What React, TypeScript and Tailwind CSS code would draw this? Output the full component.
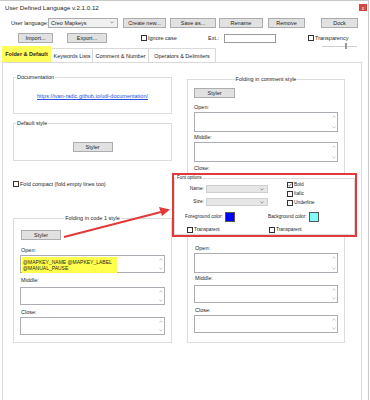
import React from "react";

function Btn({ label, className = "" }: { label: string; className?: string }) {
  return (
    <div
      className={`flex items-center justify-center bg-[#e1e1e1] border border-[#adadad] text-[#1e1e1e] ${className}`}
    >
      {label}
    </div>
  );
}

function Check({ label, checked = false, className = "" }: { label: string; checked?: boolean; className?: string }) {
  return (
    <div className={`flex items-center ${className}`}>
      <span className="relative w-[6px] h-[6px] border border-[#333] bg-white shrink-0">
        {checked && (
          <svg viewBox="0 0 6 6" className="absolute inset-0 w-[4px] h-[4px]">
            <path d="M0.5 3 L2.2 4.6 L5.5 0.8" fill="none" stroke="#222" strokeWidth="0.9" />
          </svg>
        )}
      </span>
      <span className="ml-[1px] whitespace-nowrap">{label}</span>
    </div>
  );
}

function Chevron({ up = false }: { up?: boolean }) {
  return (
    <svg viewBox="0 0 6 4" className="w-[4px] h-[3px]">
      <path d={up ? "M0.5 3.5 L3 1 L5.5 3.5" : "M0.5 0.5 L3 3 L5.5 0.5"} fill="none" stroke="#9a9a9a" strokeWidth="0.8" />
    </svg>
  );
}

function Area({ className = "", children }: { className?: string; children?: React.ReactNode }) {
  return (
    <div className={`flex border border-[#abadb3] bg-white ${className}`}>
      <div className="flex-1 min-w-0">{children}</div>
      <div className="flex flex-col justify-between items-center w-[7px] py-[2px]">
        <Chevron up />
        <Chevron />
      </div>
    </div>
  );
}

function Combo({ value = "", className = "", disabled = false }: { value?: string; className?: string; disabled?: boolean }) {
  return (
    <div
      className={`flex items-center justify-between border pl-[2px] pr-[3px] ${
        disabled ? "bg-[#e6e6e6] border-[#cfcfcf]" : "bg-[#f0f0f0] border-[#acacac]"
      } ${className}`}
    >
      <span className="whitespace-nowrap">{value}</span>
      <svg viewBox="0 0 6 4" className="w-[4px] h-[3px]">
        <path d="M0.5 0.5 L3 3 L5.5 0.5" fill="none" stroke="#555" strokeWidth="0.8" />
      </svg>
    </div>
  );
}

function FoldingGroup({ title, open, tucked = false }: { title: string; open?: React.ReactNode; tucked?: boolean }) {
  return (
    <fieldset className="mt-[28px] h-[128px] border border-[#dcdcdc] px-[6px]">
      <legend className="mx-auto px-[1px] leading-[6px]">{title}</legend>
      <Btn label="Styler" className={`${tucked ? "mt-[2px]" : "mt-[9px]"} ml-[1px] w-[40px] h-[10px]`} />
      <div className={`${tucked ? "mt-[12px]" : "mt-[7px]"} ml-[1px] h-[6px]`}>Open:</div>
      <Area className={`mt-[2px] ${tucked ? "h-[20px]" : "h-[18px]"}`}>{open}</Area>
      <div className={`${tucked ? "mt-[2px]" : "mt-[4px]"} ml-[1px] h-[6px]`}>Middle:</div>
      <Area className="mt-[4px] h-[18px]" />
      <div className="mt-[4px] ml-[1px] h-[6px]">Close:</div>
      <Area className="mt-[2px] h-[18px]" />
    </fieldset>
  );
}

export default function App() {
  return (
    <div className="relative w-[370px] h-[400px] overflow-hidden bg-white text-[#1e1e1e] font-['Liberation_Sans',Arial,sans-serif] text-[5.5px] leading-[6px]">
      <div className="w-[369px] h-[400px] border-t border-r border-[#c8c8c8]">
        {/* title bar */}
        <div className="flex justify-between h-[16px]">
          <div className="pl-[5px] pt-[4px] text-[6.2px]">User Defined Language v.2.1.0.12</div>
          <div className="mt-[3px] mr-[1px] w-[8px] h-[7px] bg-[#d64541] flex items-center justify-center text-white text-[5px]">
            x
          </div>
        </div>

        {/* row 1 */}
        <div className="flex items-center h-[11px]">
          <div className="ml-[11px] w-[36px] text-right whitespace-nowrap">User language:</div>
          <Combo value="Creo Mapkeys" className="ml-[1px] w-[70px] h-[10px]" />
          <Btn label="Create new..." className="ml-[5px] w-[43px] h-[10px]" />
          <Btn label="Save as..." className="ml-[4px] w-[46px] h-[10px]" />
          <Btn label="Rename" className="ml-[3px] w-[44px] h-[10px]" />
          <Btn label="Remove" className="ml-[5px] w-[37px] h-[10px]" />
          <Btn label="Dock" className="ml-[16px] w-[37px] h-[10px]" />
        </div>

        {/* row 2 */}
        <div className="flex items-start mt-[5px] h-[10px]">
          <Btn label="Import..." className="ml-[18px] w-[35px] h-[10px]" />
          <Btn label="Export..." className="ml-[14px] w-[40px] h-[10px]" />
          <Check label="Ignore case" className="ml-[34px] w-[67px] h-[10px]" />
          <div className="flex items-center h-[10px]">
            <span className="w-[16px]">Ext.:</span>
            <div className="w-[52px] h-[9px] border border-[#9a9a9a] bg-white" />
          </div>
          <div className="ml-[32px] flex flex-col">
            <Check label="Transparency" className="h-[10px]" />
            <div className="relative ml-[14px] w-[35px] h-[6px] flex items-center">
              <div className="w-full h-[1px] bg-[#cfcfcf]" />
              <div className="absolute left-[23px] top-0 w-[2px] h-[6px] bg-[#9a9a9a]" />
            </div>
          </div>
        </div>

        {/* tabs */}
        <div className="flex items-end mt-[3px] h-[16px]">
          <div className="ml-[2px] w-[49px] h-[16px] bg-[#ffff5a] flex items-center justify-center font-bold whitespace-nowrap">
            Folder &amp; Default
          </div>
          <div className="ml-[1px] w-[41px] h-[14px] border-t border-r border-[#d9d9d9] flex items-center justify-center whitespace-nowrap">
            Keywords Lists
          </div>
          <div className="w-[56px] h-[14px] border-t border-r border-[#d9d9d9] flex items-center justify-center whitespace-nowrap">
            Comment &amp; Number
          </div>
          <div className="w-[67px] h-[14px] border-t border-r border-[#d9d9d9] flex items-center justify-center whitespace-nowrap">
            Operators &amp; Delimiters
          </div>
        </div>

        {/* panel */}
        <div className="ml-[2px] w-[360px] h-[400px] border border-[#d9d9d9] flex pl-[10px]">
          {/* left column */}
          <div className="w-[159px] flex flex-col">
            <fieldset className="mt-[11px] h-[40px] border border-[#dcdcdc]">
              <legend className="ml-[2px] px-[1px] leading-[6px]">Documentation</legend>
              <div className="mt-[13px] text-center text-[#2a4fd6] underline whitespace-nowrap">
                https://ivan-radic.github.io/udl-documentation/
              </div>
            </fieldset>
            <fieldset className="mt-[6px] h-[41px] border border-[#dcdcdc]">
              <legend className="ml-[2px] px-[1px] leading-[6px]">Default style</legend>
              <Btn label="Styler" className="mt-[16px] mx-auto w-[40px] h-[10px]" />
            </fieldset>
            <Check label="Fold compact (fold empty lines too)" className="mt-[20px] h-[6px]" />
            <FoldingGroup
              title="Folding in code 1 style"
              open={
                <div className="ml-[1px] mt-[1px] w-[95px] h-[16px] bg-[#ffff4d] pl-[1px] pt-[2px] text-[5px] leading-[6px]">
                  <div>@MAPKEY_NAME @MAPKEY_LABEL</div>
                  <div>@MANUAL_PAUSE</div>
                </div>
              }
            />
          </div>

          {/* right column */}
          <div className="ml-[15px] w-[158px] flex flex-col">
            <fieldset className="mt-[13px] h-[125px] border border-[#dcdcdc] px-[6px]">
              <legend className="mx-auto px-[1px] leading-[6px]">Folding in comment style</legend>
              <Btn label="Styler" className="mt-[6px] w-[41px] h-[10px]" />
              <div className="mt-[6px] h-[6px]">Open:</div>
              <Area className="mt-[2px] h-[20px]" />
              <div className="mt-[2px] h-[6px]">Middle:</div>
              <Area className="mt-[2px] h-[20px]" />
              <div className="mt-[3px] h-[6px]">Close:</div>
              <Area className="mt-[2px] h-[20px]" />
            </fieldset>
            <div className="-mt-[14px]">
              <FoldingGroup title="Folding in code 2 style" tucked />
            </div>
          </div>
        </div>
      </div>

      {/* annotation: font options */}
      <div className="absolute left-[172px] top-[173px] w-[185px] h-[64px] border-2 border-[#e2393a] bg-white text-[4.8px]">
        <fieldset className="w-full h-full border border-[#dcdcdc]">
          <legend className="ml-[1px] px-[1px] leading-[6px] text-[4.5px]">Font options</legend>
          <div className="flex">
            <div className="w-[94px]">
              <div className="mt-[4px] flex items-center h-[8px]">
                <span className="w-[29px] text-right">Name:</span>
                <Combo disabled className="ml-[2px] w-[62px] h-[8px]" />
              </div>
              <div className="mt-[5px] flex items-center h-[8px]">
                <span className="w-[29px] text-right">Size:</span>
                <Combo disabled className="ml-[2px] w-[62px] h-[8px]" />
              </div>
            </div>
            <div className="ml-[18px] flex flex-col">
              <Check label="Bold" checked className="mt-[1px] h-[5px]" />
              <Check label="Italic" className="mt-[4px] h-[5px]" />
              <Check label="Underline" className="mt-[4px] h-[5px]" />
            </div>
          </div>
          <div className="mt-[6px] flex items-center h-[10px]">
            <div className="ml-[10px] w-[83px] flex items-center">
              <span className="whitespace-nowrap">Foreground color:</span>
              <span className="ml-[2px] w-[10px] h-[10px] bg-[#0000ff] border border-[#555]" />
            </div>
            <div className="flex items-center">
              <span className="whitespace-nowrap">Background color:</span>
              <span className="ml-[2px] w-[10px] h-[10px] bg-[#80ffff] border border-[#555]" />
            </div>
          </div>
          <div className="mt-[5px] flex items-center h-[5px]">
            <Check label="Transparent" className="ml-[12px] w-[82px]" />
            <Check label="Transparent" />
          </div>
        </fieldset>
      </div>

      {/* annotation arrow */}
      <svg className="absolute left-0 top-0 w-[370px] h-[400px] pointer-events-none" viewBox="0 0 370 400">
        <line x1="64" y1="237" x2="161" y2="212" stroke="#e2393a" strokeWidth="2" />
        <polygon points="170,209.5 159,207 162,216" fill="#e2393a" />
      </svg>
    </div>
  );
}
